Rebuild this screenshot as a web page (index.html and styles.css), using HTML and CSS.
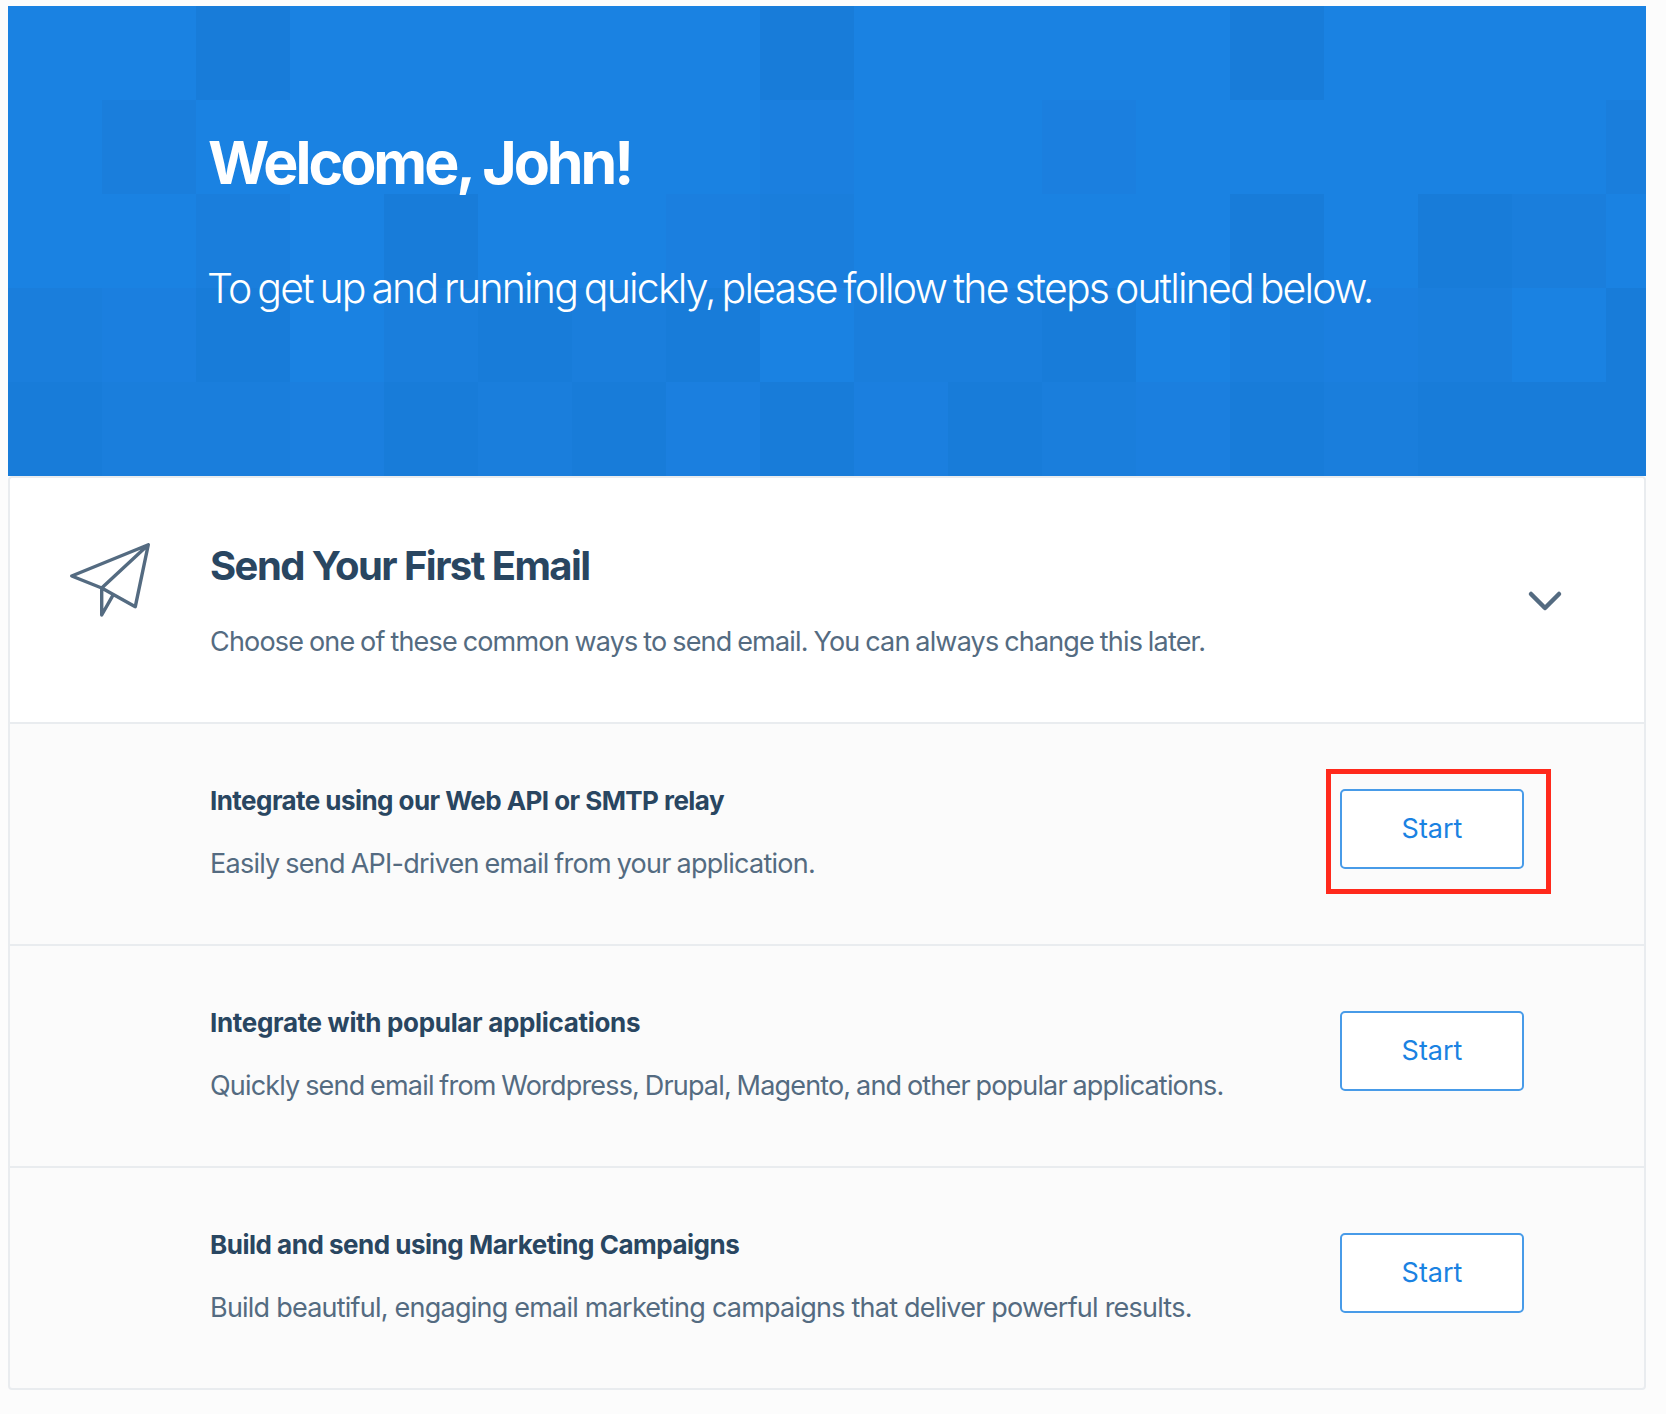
FILE: index.html
```html
<!DOCTYPE html>
<html lang="en">
<head>
<meta charset="utf-8">
<title>Welcome</title>
<link rel="stylesheet" href="styles.css">
</head>
<body>
<main class="page">
  <header class="hero">
    <svg class="hero-tiles" viewBox="0 0 1638 470" shape-rendering="crispEdges" aria-hidden="true">
      <path class="tile-light" d="M752 94h94v94h-94zM1034 94h94v94h-94zM658 188h94v94h-94zM94 282h94v94h-94zM1316 282h94v94h-94zM282 376h94v94h-94zM658 376h94v94h-94zM846 376h94v94h-94zM1128 376h94v94h-94z"/>
      <path class="tile-mid" d="M94 94h94v94h-94zM1598 94h40v94h-40zM188 188h94v94h-94zM752 188h94v94h-94zM1504 188h94v94h-94zM0 282h94v94h-94zM376 282h94v94h-94zM564 282h94v94h-94zM846 282h188v94h-188zM1222 282h94v94h-94zM1410 282h94v94h-94zM94 376h188v94h-188zM470 376h94v94h-94zM1034 376h94v94h-94zM1316 376h94v94h-94z"/>
      <path class="tile-dark" d="M188 0h94v94h-94zM752 0h94v94h-94zM1222 0h94v94h-94zM376 188h94v94h-94zM1222 188h94v94h-94zM1410 188h94v94h-94zM188 282h94v94h-94zM470 282h94v94h-94zM658 282h94v94h-94zM1034 282h94v94h-94zM1598 282h40v94h-40zM0 376h94v94h-94zM376 376h94v94h-94zM564 376h94v94h-94zM752 376h94v94h-94zM940 376h94v94h-94zM1222 376h94v94h-94zM1410 376h228v94h-228z"/>
    </svg>
    <h1 class="hero-title">Welcome, John!</h1>
    <p class="hero-text">To get up and running quickly, please follow the steps outlined below.</p>
  </header>
  <section class="card">
    <div class="card-head">
      <svg class="plane" viewBox="0 0 84 80" aria-hidden="true"><path d="M3.7 36 80.3 4.7 67.3 66.7 33.7 48ZM80.3 4.7 33.7 48V75L45.3 54.7"/></svg>
      <div class="card-copy">
        <h2 class="card-title">Send Your First Email</h2>
        <p class="text">Choose one of these common ways to send email. You can always change this later.</p>
      </div>
      <svg class="chevron" viewBox="0 0 36 22" aria-hidden="true"><path d="M4 4 18 18 32 4"/></svg>
    </div>
    <div class="row row-api">
      <div class="row-copy">
        <h3 class="row-title">Integrate using our Web API or SMTP relay</h3>
        <p class="text">Easily send API-driven email from your application.</p>
      </div>
      <div class="action"><button class="start">Start</button><div class="highlight"></div></div>
    </div>
    <div class="row row-apps">
      <div class="row-copy">
        <h3 class="row-title">Integrate with popular applications</h3>
        <p class="text">Quickly send email from Wordpress, Drupal, Magento, and other popular applications.</p>
      </div>
      <div class="action"><button class="start">Start</button></div>
    </div>
    <div class="row row-campaigns">
      <div class="row-copy">
        <h3 class="row-title">Build and send using Marketing Campaigns</h3>
        <p class="text">Build beautiful, engaging email marketing campaigns that deliver powerful results.</p>
      </div>
      <div class="action"><button class="start">Start</button></div>
    </div>
  </section>
</main>
</body>
</html>
```

FILE: styles.css
```css
* { box-sizing: border-box; margin: 0; padding: 0; }

body {
  background: #fcfcfc;
  font-family: Inter, "Liberation Sans", sans-serif;
  color: #546b81;
}

.page { width: 1638px; margin: 6px 0 0 8px; }

.hero {
  position: relative;
  height: 470px;
  padding: 121px 0 0 200px;
  background: #1a82e2;
  color: #fff;
  white-space: nowrap;
}
.hero-tiles { position: absolute; inset: 0; width: 1638px; height: 470px; }
.tile-light { fill: #1b7fdf; }
.tile-mid { fill: #1a7edc; }
.tile-dark { fill: #187cd9; }

.hero-title { position: relative; font-size: 59px; line-height: 72px; font-weight: 700; letter-spacing: -3px; }
.hero-text { position: relative; margin: 64px 0 0 -1px; font-size: 41px; line-height: 50px; font-weight: 300; letter-spacing: -1.79px; word-spacing: -3px; }

.card {
  border: 2px solid #e9ecef;
  border-radius: 4px;
  background: #fbfbfb;
  white-space: nowrap;
}
.card-head { display: flex; height: 244px; background: #fff; border-radius: 3px 3px 0 0; }
.plane { width: 84px; height: 80px; margin: 62px 0 0 58px; }
.plane path { fill: none; stroke: #546b81; stroke-width: 3.4; stroke-linejoin: round; stroke-linecap: round; }
.card-copy { flex: 1; padding: 64px 0 0 58px; }
.chevron { width: 36px; height: 22px; margin: 112px 81px 0 0; }
.chevron path { fill: none; stroke: #546b81; stroke-width: 4.5; stroke-linecap: round; stroke-linejoin: round; }
.card-title { font-size: 40px; line-height: 48px; font-weight: 700; color: #294661; letter-spacing: -1.57px; }
.text { font-size: 27px; line-height: 32px; font-weight: 400; letter-spacing: -0.82px; word-spacing: -1px; }
.card-title + .text { margin-top: 36px; }

.row {
  display: flex;
  justify-content: space-between;
  height: 222px;
  padding: 65px 120px 0 200px;
  border-top: 2px solid #e9ecef;
}
.row-title { margin-top: -4px; font-size: 26px; line-height: 32px; font-weight: 700; color: #294661; }
.row-title + .text { margin-top: 31px; }

.row-api .row-title { letter-spacing: -0.558px; }
.row-api .text { letter-spacing: -0.75px; }
.row-apps .row-title { letter-spacing: -0.33px; }
.row-apps .text { letter-spacing: -0.83px; }
.row-campaigns .row-title { letter-spacing: -0.49px; }
.row-campaigns .text { letter-spacing: -0.774px; word-spacing: 0; }

.action { position: relative; width: 184px; height: 80px; }
.start {
  width: 184px;
  height: 80px;
  border: 2px solid #489be8;
  border-radius: 5px;
  background: #fff;
  color: #1a82e2;
  font: 400 27px/32px Inter, "Liberation Sans", sans-serif;
}
.highlight { position: absolute; left: -14px; top: -20px; width: 225px; height: 125px; border: 5px solid #ff291c; }
```
